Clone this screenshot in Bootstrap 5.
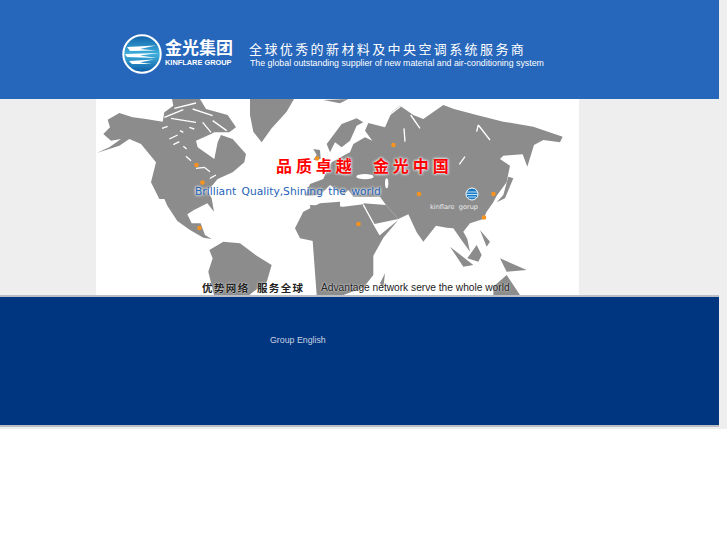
<!DOCTYPE html>
<html lang="en">
<head>
    <meta charset="UTF-8" />
    <meta name="viewport" content="width=device-width, initial-scale=1.0"/>
    <title>Kinflare Group</title>
    <link href="https://cdn.jsdelivr.net/npm/bootstrap@5.3.0/dist/css/bootstrap.min.css" rel="stylesheet">
    <style>
        body { background: #fff; font-family: "Liberation Sans", "Noto Sans CJK SC", sans-serif; }
        .site-wrap { background: #eee; height: 429px; width: 727px; }
        .site-inner { width: 719px; }
        .site-head { height: 99px; background: #2666bb; padding-left: 122px; padding-top: 34px; }
        .logo-ball { width: 40px; height: 40px; flex: none; }
        .logo-words { margin-left: 3px; margin-top: 5px; color: #fff; width: 70px; }
        .logo-cn { font-size: 17px; line-height: 20px; font-weight: 700; white-space: nowrap; }
        .logo-en { font-size: 7.4px; line-height: 8px; font-weight: 700; white-space: nowrap; }
        .tag-words { margin-left: 14px; color: #fff; margin-top: 8px; }
        .tag-cn { font-size: 13px; line-height: 16px; letter-spacing: 2.4px; white-space: nowrap; }
        .tag-en { font-size: 8.8px; line-height: 10px; white-space: nowrap; margin-left: 1px; }
        .map-box { width: 483px; height: 196px; margin-left: 96px; background: #fff; position: relative; overflow: hidden; }
        .map-box svg { display: block; }
        .map-label { position: absolute; white-space: nowrap; }
        .map-cn { left: 180px; top: 57px; color: #f00; font-size: 16px; font-weight: 700; letter-spacing: 3.9px; line-height: 22px; text-shadow: 0 0 3px #fff, 0 0 3px #fff; word-spacing: 9px; }
        .map-en { left: 99px; top: 85px; color: #2463b8; font-family: "DejaVu Sans", sans-serif; font-size: 10.7px; line-height: 16px; text-shadow: 0 0 3px #fff, 0 0 3px #fff; word-spacing: 2px; }
        .map-pin { left: 334px; top: 103px; color: #eee; font-family: "DejaVu Sans", sans-serif; font-size: 6.6px; line-height: 10px; word-spacing: 2px; }
        .map-foot-cn { left: 106px; top: 182px; color: #222; font-size: 10.5px; font-weight: 700; letter-spacing: 1.4px; line-height: 14px; text-shadow: 0 0 2px #fff; word-spacing: 3px; }
        .map-foot-en { left: 225px; top: 182px; color: #222; font-size: 10.2px; line-height: 14px; text-shadow: 0 0 2px #fff; }
        .site-foot { height: 132px; background: #003580; border-top: 2px solid #b9bdc4; border-bottom: 2px solid #b9bdc4; padding-top: 36px; padding-left: 270px; color: #c9d3e2; font-size: 8.8px; line-height: 14px; }
    </style>
</head>
<body>
<div class="site-wrap">
    <div class="site-inner">
        <div class="site-head d-flex align-items-start">
            <svg class="logo-ball" viewBox="0 0 40 40">
                <defs>
                    <linearGradient id="ball" x1="0" y1="0" x2="0" y2="1">
                        <stop offset="0" stop-color="#0f5fa8"/>
                        <stop offset=".5" stop-color="#3fb0dc"/>
                        <stop offset="1" stop-color="#0b5aa5"/>
                    </linearGradient>
                </defs>
                <circle cx="20" cy="20" r="18.7" fill="url(#ball)" stroke="#fff" stroke-width="2"/>
                <path d="M5 13 L34 11.5 L18 15 L34 16.5 L8 17Z M3 20 L37 19 L18 21.5 L35 24 L5 23Z M7 27 L32 25.5 L18 28.5 L30 30 L10 30Z" fill="#fff"/>
            </svg>
            <div class="logo-words">
                <div class="logo-cn">金光集团</div>
                <div class="logo-en">KINFLARE GROUP</div>
            </div>
            <div class="tag-words">
                <div class="tag-cn">全球优秀的新材料及中央空调系统服务商</div>
                <div class="tag-en">The global outstanding supplier of new material and air-conditioning system</div>
            </div>
        </div>
        <div class="map-box">
            <svg width="483" height="196" viewBox="96 99 483 196">
                <defs>
                    <filter id="soft" x="0" y="0" width="1" height="1"><feGaussianBlur stdDeviation=".5"/></filter>
                </defs>
                <g fill="#8c8c8c" filter="url(#soft)">
                    <!-- canada and alaska -->
                    <g transform="translate(96 99) scale(.3333)">
                        <path d="M2 162 L40 145 L75 120 L45 125 L22 105 L42 85 L35 62 L70 42 L110 55 L150 60 L200 68 L205 40 L232 20 L228 0 L312 0 L330 30 L395 48 L420 85 L400 100 L355 100 L345 105 L300 125 L305 145 L355 180 L365 130 L375 108 L410 120 L450 165 L445 190 L410 220 L365 240 L340 270 L320 300 L190 300 L165 250 L180 190 L135 135 L100 120 L70 140Z"/>
                        <g fill="none" stroke="#fff" stroke-width="4">
                            <path d="M198 88 L215 82 M220 120 L245 108 M232 137 L250 128 M262 142 L272 150 M270 172 L285 185 M300 208 L325 205 L342 218 M335 242 L360 228 M252 95 L262 100 M280 85 L295 90"/>
                            <path d="M205 55 L262 32 M225 58 L300 70 M290 30 L350 50 M350 65 L392 95 M300 12 L235 28 M320 70 L345 100"/>
                        </g>
                    </g>
                    <!-- rest of the americas, greenland, west edge of africa -->
                    <g transform="translate(90 95) scale(.3333)">
                        <path d="M192 240 L362 240 L352 285 L365 310 L372 350 L352 325 L312 345 L292 358 L305 385 L332 385 L345 420 L365 432 L340 428 L300 405 L262 378 L232 332Z"/>
                        <path d="M480 12 L612 12 L590 50 L545 100 L515 142 L490 110 L480 60Z"/>
                        <path d="M358 465 L400 440 L450 445 L500 482 L545 510 L530 562 L490 590 L478 600 L372 600 L355 530 L368 490Z"/>
                        <path d="M615 400 L640 350 L690 325 L750 320 L760 600 L745 560 L720 470 L680 440 L630 430Z"/>
                        <path d="M350 362 L420 382 L385 372Z"/>
                    </g>
                    <!-- eurasia, africa, oceania -->
                    <g transform="translate(330 95) scale(.3333)">
                        <path d="M-75 302 L-60 267 L-20 252 L-10 227 L5 202 L40 182 L60 172 L70 147 L105 127 L127 137 L105 107 L115 84 L165 97 L185 52 L210 32 L250 60 L280 72 L340 30 L372 42 L440 60 L520 80 L610 95 L698 125 L690 142 L640 135 L612 150 L592 215 L578 178 L520 182 L510 192 L540 212 L530 262 L500 302 L490 322 L470 350 L460 372 L420 385 L400 410 L412 432 L420 470 L395 436 L370 400 L350 398 L318 392 L280 440 L260 412 L235 358 L205 372 L168 330 L150 305 L70 305 L55 285 L40 300 L0 270 L-30 300Z"/>
                        <path d="M-10 147 L35 87 L80 70 L100 82 L80 92 L60 137 L35 157 L15 142 L0 172Z"/>
                        <path d="M-50 162 L-30 165 L-28 192 L-50 195 L-40 180Z"/>
                        <path d="M-60 330 L40 335 L100 328 L130 388 L150 420 L205 375 L160 428 L130 482 L130 540 L100 578 L40 600 L-40 600Z"/>
                        <path d="M100 325 L168 330 L205 372 L130 388Z"/>
                        <path d="M535 245 L550 250 L525 310 L500 322 L520 300Z"/>
                        <path d="M412 490 L440 450 L455 480 L445 500Z M360 455 L430 510 L400 515Z M450 405 L480 440 L470 455Z M510 490 L590 525 L530 530Z M490 575 L530 540 L570 600 L490 600Z M150 565 L165 535 L160 580Z"/>
                        <path d="M-20 15 L55 12 L30 25Z"/>
                        <g fill="#fff">
                            <ellipse cx="105" cy="245" rx="26" ry="8"/>
                            <ellipse cx="170" cy="265" rx="5" ry="15"/>
                        </g>
                        <g fill="none" stroke="#fff" stroke-width="4">
                            <path d="M100 330 L150 420 M175 62 L212 34 M222 100 L225 140 M242 60 L270 100 M445 90 L480 135 M405 185 L388 208 M445 90 L440 110"/>
                        </g>
                    </g>
                </g>
                <g fill="#f7931e">
                    <circle cx="196.500" cy="165" r="2.300"/><circle cx="202.500" cy="182.500" r="2.300"/><circle cx="199.500" cy="228" r="2.300"/>
                    <circle cx="317" cy="158.500" r="2.300"/><circle cx="393.500" cy="145" r="2.300"/><circle cx="419" cy="194" r="2.300"/>
                    <circle cx="358.500" cy="224" r="2.300"/><circle cx="493.500" cy="194" r="2.300"/><circle cx="484" cy="217.500" r="2.300"/>
                </g>
                <circle cx="472" cy="194" r="6" fill="#1b78c4" stroke="#fff" stroke-width="1"/>
                <path d="M467 192h10M466.500 194.500h11M468 197h8" stroke="#bfe6f7" stroke-width="1"/>
            </svg>
            <div class="map-label map-cn">品质卓越 金光中国</div>
            <div class="map-label map-en">Brilliant Quality,Shining the world</div>
            <div class="map-label map-pin">kinflare gorup</div>
            <div class="map-label map-foot-cn">优势网络 服务全球</div>
            <div class="map-label map-foot-en">Advantage network serve the whole world</div>
        </div>
        <div class="site-foot">Group English</div>
    </div>
</div>
<script src="https://cdn.jsdelivr.net/npm/bootstrap@5.3.0/dist/js/bootstrap.bundle.min.js"></script>
</body>
</html>
